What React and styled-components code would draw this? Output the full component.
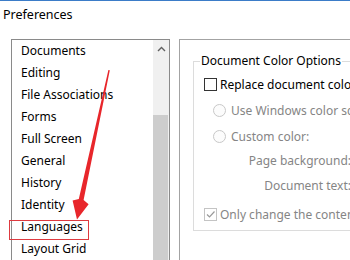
import styled, { createGlobalStyle } from "styled-components";

const GlobalStyle = createGlobalStyle`
  html, body {
    margin: 0;
    padding: 0;
    background: #ffffff;
    overflow: hidden;
  }
  body {
    font-family: "Segoe UI", "Noto Sans", "Open Sans", sans-serif;
    font-size: 12px;
    color: #000;
  }
`;

const categories = [
  "Documents",
  "Editing",
  "File Associations",
  "Forms",
  "Full Screen",
  "General",
  "History",
  "Identity",
  "Languages",
  "Layout Grid",
  "Measuring",
];

function App() {
  return (
    <Window>
      <GlobalStyle />
      <TitleBar>Preferences</TitleBar>
      <Body>
        <ListBox>
          <Items>
            {categories.map((name) => (
              <Item key={name}>
                {name}
                {name === "Languages" && <Highlight />}
              </Item>
            ))}
          </Items>
          <ScrollBar>
            <ScrollButton>
              <svg width="9" height="6" viewBox="0 0 9 6">
                <path d="M1 5 L4.5 1.5 L8 5" fill="none" stroke="#606060" strokeWidth="1.4" />
              </svg>
            </ScrollButton>
            <Track>
              <Thumb />
            </Track>
          </ScrollBar>
        </ListBox>
        <Panel>
          <Group>
            <Legend>Document Color Options</Legend>
            <Row $h={26}>
              <CheckBox />
              <span>Replace document colors</span>
            </Row>
            <Row $h={26} $indent={9} $disabled>
              <Radio />
              <span>Use Windows color scheme</span>
            </Row>
            <Row $h={26} $indent={9} $disabled>
              <Radio />
              <span>Custom color:</span>
            </Row>
            <Row $h={22} $disabled>
              <FieldLabel>Page background:</FieldLabel>
            </Row>
            <Row $h={28} $disabled>
              <FieldLabel>Document text:</FieldLabel>
            </Row>
            <Row $h={30} $disabled>
              <CheckBox $checked $disabled>
                <svg width="11" height="11" viewBox="0 0 11 11">
                  <path d="M2 5.5 L4.5 8 L9.5 2.5" fill="none" stroke="#9a9a9a" strokeWidth="1.2" />
                </svg>
              </CheckBox>
              <span>Only change the content colors</span>
            </Row>
          </Group>
        </Panel>
      </Body>
      <Arrow viewBox="0 0 350 260" width="350" height="260">
        <polygon
          points="108.4,70 109.8,70.3 83.6,200 88.6,204.2 77,219.5 72.6,200.6 78.8,199"
          fill="#e8262b"
        />
      </Arrow>
    </Window>
  );
}

const Window = styled.div`
  position: relative;
  width: 350px;
  height: 260px;
  overflow: hidden;
  background: #ffffff;
`;

const TitleBar = styled.div`
  height: 26px;
  border-top: 1px solid #3b7cc8;
  display: flex;
  align-items: center;
  padding-left: 3px;
  font-size: 12.5px;
`;

const Body = styled.div`
  display: flex;
  gap: 9px;
  padding: 12px 0 0 11px;
`;

const ListBox = styled.div`
  flex: none;
  width: 157px;
  height: 240px;
  border: 1px solid #8a8a8a;
  display: flex;
  background: #fff;
`;

const Items = styled.div`
  flex: 1;
  display: flex;
  flex-direction: column;
`;

const Item = styled.div`
  position: relative;
  flex: none;
  height: 22px;
  line-height: 22px;
  padding-left: 9px;
  white-space: nowrap;
`;

const Highlight = styled.div`
  position: absolute;
  left: -3px;
  top: 4px;
  width: 78px;
  height: 18px;
  border: 1px solid #de3a40;
`;

const ScrollBar = styled.div`
  flex: none;
  width: 16px;
  display: flex;
  flex-direction: column;
  background: #f0f0f0;
`;

const ScrollButton = styled.div`
  flex: none;
  height: 17px;
  display: flex;
  align-items: center;
  justify-content: center;
`;

const Track = styled.div`
  flex: 1;
  min-height: 0;
  overflow: hidden;
`;

const Thumb = styled.div`
  margin: 58px 1px 0 0;
  height: 160px;
  background: #cdcdcd;
`;

const Panel = styled.div`
  flex: 1;
  height: 240px;
  border: 1px solid #a3a3a3;
  border-right: none;
  padding: 13px 0 0 13px;
  background: #fff;
`;

const Group = styled.fieldset`
  margin: 0;
  height: 174px;
  padding: 2px 0 0 10px;
  border: 1px solid #dcdcdc;
  border-right: none;
  display: flex;
  flex-direction: column;
  min-width: 0;
`;

const Legend = styled.legend`
  margin-left: -4px;
  padding: 0 1px;
  line-height: 16px;
  white-space: nowrap;
`;

const Row = styled.div`
  flex: none;
  height: ${(p) => p.$h}px;
  display: flex;
  align-items: center;
  gap: 3px;
  padding-left: ${(p) => p.$indent || 0}px;
  color: ${(p) => (p.$disabled ? "#858585" : "#000")};
  white-space: nowrap;
`;

const CheckBox = styled.span`
  flex: none;
  width: 11px;
  height: 11px;
  border: 1px solid ${(p) => (p.$disabled ? "#c4c4c4" : "#333")};
  background: #fff;
  display: flex;
  align-items: center;
  justify-content: center;
`;

const Radio = styled.span`
  flex: none;
  width: 11px;
  height: 11px;
  border-radius: 50%;
  border: 1px solid #c8c8c8;
  background: #fcfcfc;
  margin-right: 2px;
`;

const FieldLabel = styled.span`
  width: 147px;
  text-align: right;
`;

const Arrow = styled.svg`
  position: absolute;
  top: 0;
  left: 0;
  pointer-events: none;
`;

export default App;
